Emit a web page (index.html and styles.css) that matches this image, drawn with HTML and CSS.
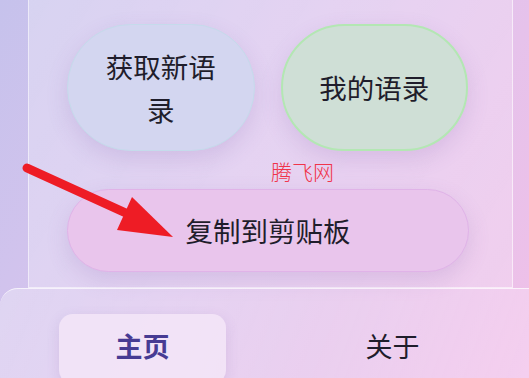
FILE: index.html
```html
<!DOCTYPE html>
<html lang="zh-CN">
<head>
    <meta charset="UTF-8">
    <meta name="viewport" content="width=device-width, initial-scale=1.0">
    <title>语录</title>
    <link rel="stylesheet" href="styles.css">
</head>
<body>
    <div class="card">
        <div class="btn-row">
            <button class="btn btn-new">获取新语录</button>
            <button class="btn btn-mine">我的语录</button>
        </div>
        <button class="btn btn-copy">复制到剪贴板</button>
    </div>

    <nav class="tabbar">
        <a class="tab active">主页</a>
        <a class="tab">关于</a>
    </nav>

    <span class="watermark">腾飞网</span>
    <svg class="arrow" width="180" height="90" viewBox="0 0 180 90">
        <line x1="27" y1="14" x2="128" y2="60" stroke="#ee1c25" stroke-width="9" stroke-linecap="round"/>
        <polygon points="132,43 117,76 173,83" fill="#ee1c25"/>
    </svg>
</body>
</html>
```

FILE: styles.css
```css
* {
    box-sizing: border-box;
}
html, body {
    height: 100%;
}
body {
    margin: 0;
    padding: 0 16px 0 28px;
    overflow: hidden;
    position: relative;
    font-family: "Noto Sans CJK SC", "Noto Sans", sans-serif;
    color: #1f1d2b;
    background: linear-gradient(120deg, #c6c2ec 0%, #dcc4ee 45%, #f0c0e8 100%);
}
.card {
    width: 485px;
    padding: 24px 44px 15px 38px;
    background: linear-gradient(120deg, rgba(255,255,255,0.28), rgba(255,255,255,0.22));
    border: 1px solid rgba(255,255,255,0.55);
    border-top: none;
}
.btn-row {
    display: flex;
    gap: 26px;
    margin-bottom: 38px;
}
.btn {
    font-family: inherit;
    font-size: 27.5px;
    line-height: 43px;
    color: #1f1d2b;
    border-radius: 999px;
    cursor: pointer;
    box-shadow: 0 8px 22px rgba(120, 80, 160, 0.16);
}
.btn-new,
.btn-mine {
    width: 188px;
    height: 127px;
    padding: 0 30px;
}
.btn-new {
    background: #d3d6f0;
    border: 1.5px solid #c5dbeb;
}
.btn-mine {
    background: #cfdfd6;
    border: 2px solid #b3e7b3;
}
.btn-copy {
    display: block;
    width: 402px;
    height: 83px;
    background: #e9c5ec;
    border: 1.5px solid #e0b3e8;
}
.tabbar {
    display: flex;
    gap: 83px;
    margin: 0 -16px 0 -28px;
    padding: 25px 0 0 59px;
    height: 100px;
    background: linear-gradient(110deg, rgba(255,255,255,0.3), rgba(255,255,255,0.22) 60%, rgba(255,240,255,0.3));
    border-top: 1px solid rgba(255,255,255,0.7);
    border-top-left-radius: 18px;
}
.tab {
    width: 167px;
    height: 70px;
    padding-top: 11px;
    text-align: center;
    font-size: 27px;
    line-height: 42px;
    color: #1f1d2b;
}
.tab.active {
    font-weight: bold;
    color: #473b93;
    background: rgba(245, 232, 248, 0.75);
    border-radius: 14px;
    box-shadow: 0 4px 14px rgba(120, 80, 160, 0.14);
}
.watermark {
    position: absolute;
    left: 271px;
    top: 156px;
    font-size: 21px;
    font-weight: 300;
    color: #f0344a;
}
.arrow {
    position: absolute;
    left: 0;
    top: 154px;
}
```
